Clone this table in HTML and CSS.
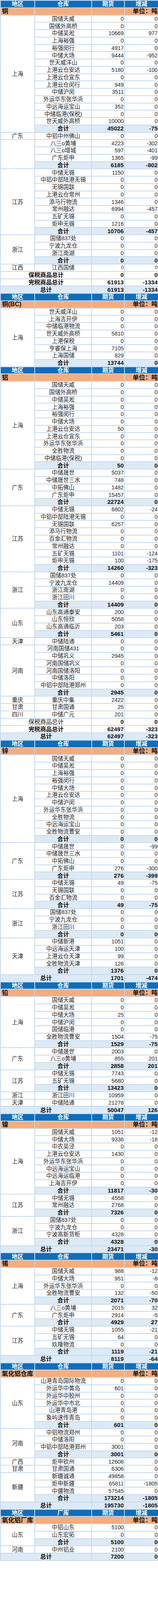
FILE: index.html
```html
<!DOCTYPE html>
<html lang="zh-CN">
<head>
<meta charset="utf-8">
<title>库存周报</title>
<link rel="stylesheet" href="styles.css">
</head>
<body>
<table class="stock">
<colgroup><col class="c1"><col class="c2"><col class="c3"><col class="c4"></colgroup>

<tbody>
<tr class="hd"><td>地区</td><td>仓库</td><td>期货</td><td>增减</td></tr>
<tr class="unit"><td class="metal">铜</td><td></td><td></td><td class="u">单位：吨</td></tr>
<tr><td class="reg" rowspan="16">上海</td><td class="wh">国储天威</td><td class="num">0</td><td class="num">0</td></tr>
<tr><td class="wh">国储外高桥</td><td class="num">0</td><td class="num">0</td></tr>
<tr><td class="wh">中储吴淞</td><td class="num">10669</td><td class="num">977</td></tr>
<tr><td class="wh">上海裕强</td><td class="num">0</td><td class="num">0</td></tr>
<tr><td class="wh">裕强闵行</td><td class="num">4917</td><td class="num">0</td></tr>
<tr><td class="wh">中储大场</td><td class="num">9444</td><td class="num">-952</td></tr>
<tr><td class="wh">世天威洋山</td><td class="num">0</td><td class="num">0</td></tr>
<tr><td class="wh">上港云仓安达</td><td class="num">5180</td><td class="num">-100</td></tr>
<tr><td class="wh">上港云仓宜东</td><td class="num">0</td><td class="num">0</td></tr>
<tr><td class="wh">上港云仓闵行</td><td class="num">949</td><td class="num">0</td></tr>
<tr><td class="wh">中储沪闵</td><td class="num">3511</td><td class="num">0</td></tr>
<tr><td class="wh">外运华东张华浜</td><td class="num">0</td><td class="num">0</td></tr>
<tr><td class="wh">中远海运宝山</td><td class="num">352</td><td class="num">0</td></tr>
<tr><td class="wh">中储临港(保税)</td><td class="num">0</td><td class="num">0</td></tr>
<tr><td class="wh">世天威外高桥</td><td class="num">10000</td><td class="num">0</td></tr>
<tr class="sub"><td class="wh">合计</td><td class="num">45022</td><td class="num">-75</td></tr>
<tr><td class="reg">广东</td><td class="wh">中铝中州佛山</td><td class="num">0</td><td class="num">0</td></tr>
<tr><td class="reg" rowspan="4"></td><td class="wh">八三o黄埔</td><td class="num">4223</td><td class="num">-302</td></tr>
<tr><td class="wh">八三o增城</td><td class="num">597</td><td class="num">-401</td></tr>
<tr><td class="wh">广东炬申</td><td class="num">1365</td><td class="num">-99</td></tr>
<tr class="sub"><td class="wh">合计</td><td class="num">6185</td><td class="num">-802</td></tr>
<tr><td class="reg" rowspan="9">江苏</td><td class="wh">中储无锡</td><td class="num">1150</td><td class="num">0</td></tr>
<tr><td class="wh">中铝中部陆港无锡</td><td class="num">0</td><td class="num">0</td></tr>
<tr><td class="wh">无锡国联</td><td class="num">0</td><td class="num">0</td></tr>
<tr><td class="wh">上港云仓常州</td><td class="num">0</td><td class="num">0</td></tr>
<tr><td class="wh">添马行物流</td><td class="num">1346</td><td class="num">0</td></tr>
<tr><td class="wh">常州融达</td><td class="num">6994</td><td class="num">-457</td></tr>
<tr><td class="wh">五矿无锡</td><td class="num">0</td><td class="num">0</td></tr>
<tr><td class="wh">炬申无锡</td><td class="num">1216</td><td class="num">0</td></tr>
<tr class="sub"><td class="wh">合计</td><td class="num">10706</td><td class="num">-457</td></tr>
<tr><td class="reg" rowspan="4">浙江</td><td class="wh">国储837处</td><td class="num">0</td><td class="num">0</td></tr>
<tr><td class="wh">宁波九龙仓</td><td class="num">0</td><td class="num">0</td></tr>
<tr><td class="wh">浙江南湖</td><td class="num">0</td><td class="num">0</td></tr>
<tr class="sub"><td class="wh">合计</td><td class="num">0</td><td class="num">0</td></tr>
<tr><td class="reg">江西</td><td class="wh">江西国储</td><td class="num small">0</td><td class="num small">0</td></tr>
<tr class="grand"><td class="lbl" colspan="2">保税商品总计</td><td class="num">0</td><td class="num">0</td></tr>
<tr class="grand"><td class="lbl" colspan="2">完税商品总计</td><td class="num">61913</td><td class="num">-1334</td></tr>
<tr class="tot"><td class="lbl" colspan="2">总计</td><td class="num">61913</td><td class="num">-1334</td></tr>
</tbody>

<tbody>
<tr class="hd"><td>地区</td><td>仓库</td><td>期货</td><td>增减</td></tr>
<tr class="unit"><td class="metal">铜(BC)</td><td></td><td></td><td class="u">单位：吨</td></tr>
<tr><td class="reg" rowspan="8">上海</td><td class="wh">世天威洋山</td><td class="num">0</td><td class="num">0</td></tr>
<tr><td class="wh">上海吉开伊</td><td class="num">0</td><td class="num">0</td></tr>
<tr><td class="wh">中储临港物流</td><td class="num">0</td><td class="num">0</td></tr>
<tr><td class="wh">世天威外高桥</td><td class="num">5810</td><td class="num">0</td></tr>
<tr><td class="wh">上港保税</td><td class="num">0</td><td class="num">0</td></tr>
<tr><td class="wh">亨睿保上海</td><td class="num">7105</td><td class="num">0</td></tr>
<tr><td class="wh">上海国储</td><td class="num">829</td><td class="num">0</td></tr>
<tr class="sub"><td class="wh">合计</td><td class="num">13744</td><td class="num">0</td></tr>
</tbody>

<tbody>
<tr class="hd"><td>地区</td><td>仓库</td><td>期货</td><td>增减</td></tr>
<tr class="unit"><td class="metal">铝</td><td></td><td></td><td class="u">单位：吨</td></tr>
<tr><td class="reg" rowspan="12">上海</td><td class="wh">国储天威</td><td class="num">0</td><td class="num">0</td></tr>
<tr><td class="wh">国储外高桥</td><td class="num">0</td><td class="num">0</td></tr>
<tr><td class="wh">中储吴淞</td><td class="num">0</td><td class="num">0</td></tr>
<tr><td class="wh">上海裕强</td><td class="num">0</td><td class="num">0</td></tr>
<tr><td class="wh">裕强闵行</td><td class="num">0</td><td class="num">0</td></tr>
<tr><td class="wh">中储大场</td><td class="num">0</td><td class="num">0</td></tr>
<tr><td class="wh">上港云仓安达</td><td class="num">50</td><td class="num">0</td></tr>
<tr><td class="wh">上港云仓宜东</td><td class="num">0</td><td class="num">0</td></tr>
<tr><td class="wh">外运华东张华浜</td><td class="num">0</td><td class="num">0</td></tr>
<tr><td class="wh">全胜物流</td><td class="num">0</td><td class="num">0</td></tr>
<tr><td class="wh">中储临港(保税)</td><td class="num">0</td><td class="num">0</td></tr>
<tr class="sub"><td class="wh">合计</td><td class="num">50</td><td class="num">0</td></tr>
<tr><td class="reg" rowspan="5">广东</td><td class="wh">中储晟世</td><td class="num">5037</td><td class="num">0</td></tr>
<tr><td class="wh">中储晟世三水</td><td class="num">748</td><td class="num">0</td></tr>
<tr><td class="wh">中拓佛山</td><td class="num">1482</td><td class="num">0</td></tr>
<tr><td class="wh">广东炬申</td><td class="num">15457</td><td class="num">0</td></tr>
<tr class="sub"><td class="wh">合计</td><td class="num">22724</td><td class="num">0</td></tr>
<tr><td class="reg" rowspan="9">江苏</td><td class="wh">中储无锡</td><td class="num">6802</td><td class="num">-24</td></tr>
<tr><td class="wh">中铝中部陆港无锡</td><td class="num">0</td><td class="num">0</td></tr>
<tr><td class="wh">无锡国联</td><td class="num">6257</td><td class="num">0</td></tr>
<tr><td class="wh">添马行物流</td><td class="num">0</td><td class="num">0</td></tr>
<tr><td class="wh">百金汇物流</td><td class="num">0</td><td class="num">0</td></tr>
<tr><td class="wh">常州融达</td><td class="num">0</td><td class="num">0</td></tr>
<tr><td class="wh">五矿无锡</td><td class="num">1101</td><td class="num">-124</td></tr>
<tr><td class="wh">炬申无锡</td><td class="num">100</td><td class="num">-175</td></tr>
<tr class="sub"><td class="wh">合计</td><td class="num">14260</td><td class="num">-323</td></tr>
<tr><td class="reg" rowspan="5">浙江</td><td class="wh">国储837处</td><td class="num">0</td><td class="num">0</td></tr>
<tr><td class="wh">宁波九龙仓</td><td class="num">14409</td><td class="num">0</td></tr>
<tr><td class="wh">浙江南湖</td><td class="num">0</td><td class="num">0</td></tr>
<tr><td class="wh">浙江田川</td><td class="num">0</td><td class="num">0</td></tr>
<tr class="sub"><td class="wh">合计</td><td class="num">14409</td><td class="num">0</td></tr>
<tr><td class="reg" rowspan="4">山东</td><td class="wh">山东高通泰安</td><td class="num">200</td><td class="num">0</td></tr>
<tr><td class="wh">山东恒欣</td><td class="num">5058</td><td class="num">0</td></tr>
<tr><td class="wh">山东高通临沂</td><td class="num">203</td><td class="num">0</td></tr>
<tr class="sub"><td class="wh">合计</td><td class="num">5461</td><td class="num">0</td></tr>
<tr><td class="reg">天津</td><td class="wh">中储陆通</td><td class="num">0</td><td class="num">0</td></tr>
<tr><td class="reg" rowspan="7">河南</td><td class="wh">河南国储431</td><td class="num">0</td><td class="num">0</td></tr>
<tr><td class="wh">中储巩义</td><td class="num">2945</td><td class="num">0</td></tr>
<tr><td class="wh">河南国储巩义</td><td class="num">0</td><td class="num">0</td></tr>
<tr><td class="wh">河南国储洛阳</td><td class="num">0</td><td class="num">0</td></tr>
<tr><td class="wh">中储洛阳</td><td class="num">0</td><td class="num">0</td></tr>
<tr><td class="wh">中铝中部陆港郑州</td><td class="num">0</td><td class="num">0</td></tr>
<tr class="sub"><td class="wh">合计</td><td class="num">2945</td><td class="num">0</td></tr>
<tr><td class="reg">重庆</td><td class="wh">重庆中集</td><td class="num">2422</td><td class="num">0</td></tr>
<tr><td class="reg">甘肃</td><td class="wh">甘肃国通</td><td class="num">25</td><td class="num">0</td></tr>
<tr><td class="reg">四川</td><td class="wh">中储广元</td><td class="num">201</td><td class="num">0</td></tr>
<tr class="grand"><td class="lbl plain" colspan="2">保税商品总计</td><td class="num">0</td><td class="num">0</td></tr>
<tr class="grand"><td class="lbl" colspan="2">完税商品总计</td><td class="num">62497</td><td class="num">-323</td></tr>
<tr class="tot"><td class="lbl" colspan="2">总计</td><td class="num">62497</td><td class="num">-323</td></tr>
</tbody>

<tbody>
<tr class="hd"><td>地区</td><td>仓库</td><td>期货</td><td>增减</td></tr>
<tr class="unit"><td class="metal">锌</td><td></td><td></td><td class="u">单位：吨</td></tr>
<tr><td class="reg" rowspan="12">上海</td><td class="wh">国储天威</td><td class="num">0</td><td class="num">0</td></tr>
<tr><td class="wh">中储吴淞</td><td class="num">0</td><td class="num">0</td></tr>
<tr><td class="wh">上海裕强</td><td class="num">0</td><td class="num">0</td></tr>
<tr><td class="wh">裕强闵行</td><td class="num">0</td><td class="num">0</td></tr>
<tr><td class="wh">中储大场</td><td class="num">0</td><td class="num">0</td></tr>
<tr><td class="wh">上港云仓安达</td><td class="num">0</td><td class="num">0</td></tr>
<tr><td class="wh">中储沪闵</td><td class="num">0</td><td class="num">0</td></tr>
<tr><td class="wh">外运华东张华浜</td><td class="num">0</td><td class="num">0</td></tr>
<tr><td class="wh">全胜物流</td><td class="num">0</td><td class="num">0</td></tr>
<tr><td class="wh">中远海运宝山</td><td class="num">0</td><td class="num">0</td></tr>
<tr><td class="wh">全胜物流曹安</td><td class="num">0</td><td class="num">0</td></tr>
<tr class="sub"><td class="wh">合计</td><td class="num">0</td><td class="num">0</td></tr>
<tr><td class="reg" rowspan="5">广东</td><td class="wh">中储晟世</td><td class="num">0</td><td class="num">-99</td></tr>
<tr><td class="wh">中储晟世三水</td><td class="num">0</td><td class="num">0</td></tr>
<tr><td class="wh">中拓佛山</td><td class="num">0</td><td class="num">0</td></tr>
<tr><td class="wh">广东炬申</td><td class="num">276</td><td class="num">-300</td></tr>
<tr class="sub"><td class="wh">合计</td><td class="num">276</td><td class="num">-399</td></tr>
<tr><td class="reg" rowspan="4">江苏</td><td class="wh">中储无锡</td><td class="num">49</td><td class="num">-75</td></tr>
<tr><td class="wh">无锡国联</td><td class="num">0</td><td class="num">0</td></tr>
<tr><td class="wh">百金汇物流</td><td class="num">0</td><td class="num">0</td></tr>
<tr class="sub"><td class="wh">合计</td><td class="num">49</td><td class="num">-75</td></tr>
<tr><td class="reg" rowspan="4">浙江</td><td class="wh">国储837处</td><td class="num">0</td><td class="num">0</td></tr>
<tr><td class="wh">宁波九龙仓</td><td class="num">0</td><td class="num">0</td></tr>
<tr><td class="wh">浙江田川</td><td class="num">0</td><td class="num">0</td></tr>
<tr class="sub"><td class="wh">合计</td><td class="num">0</td><td class="num">0</td></tr>
<tr><td class="reg" rowspan="5">天津</td><td class="wh">中储新港</td><td class="num">1051</td><td class="num">0</td></tr>
<tr><td class="wh">中远海运天津</td><td class="num">100</td><td class="num">0</td></tr>
<tr><td class="wh">上港云仓天津</td><td class="num">99</td><td class="num">0</td></tr>
<tr><td class="wh">全胜物流天津</td><td class="num">126</td><td class="num">0</td></tr>
<tr class="sub"><td class="wh">合计</td><td class="num">1376</td><td class="num">0</td></tr>
<tr class="tot"><td class="lbl" colspan="2">总计</td><td class="num">1701</td><td class="num">-474</td></tr>
</tbody>

<tbody>
<tr class="hd"><td>地区</td><td>仓库</td><td>期货</td><td>增减</td></tr>
<tr class="unit"><td class="metal">铅</td><td></td><td></td><td class="u">单位：吨</td></tr>
<tr><td class="reg" rowspan="7">上海</td><td class="wh">国储天威</td><td class="num">0</td><td class="num">0</td></tr>
<tr><td class="wh">中储吴淞</td><td class="num">0</td><td class="num">0</td></tr>
<tr><td class="wh">中储大场</td><td class="num">25</td><td class="num">0</td></tr>
<tr><td class="wh">中储沪闵</td><td class="num">0</td><td class="num">0</td></tr>
<tr><td class="wh">国储临港</td><td class="num">0</td><td class="num">0</td></tr>
<tr><td class="wh">全胜物流曹安</td><td class="num">1504</td><td class="num">-75</td></tr>
<tr class="sub"><td class="wh">合计</td><td class="num">1529</td><td class="num">-75</td></tr>
<tr><td class="reg" rowspan="3">广东</td><td class="wh">中储晟世</td><td class="num">2003</td><td class="num">0</td></tr>
<tr><td class="wh">八三o黄埔</td><td class="num">855</td><td class="num">201</td></tr>
<tr class="sub"><td class="wh">合计</td><td class="num">2858</td><td class="num">201</td></tr>
<tr><td class="reg" rowspan="3">江苏</td><td class="wh">中储无锡</td><td class="num">7743</td><td class="num">0</td></tr>
<tr><td class="wh">五矿无锡</td><td class="num">5680</td><td class="num">0</td></tr>
<tr class="sub"><td class="wh">合计</td><td class="num">13423</td><td class="num">0</td></tr>
<tr><td class="reg">浙江</td><td class="wh">浙江田川</td><td class="num">10959</td><td class="num">0</td></tr>
<tr><td class="reg">天津</td><td class="wh">中储陆通</td><td class="num">21278</td><td class="num">0</td></tr>
<tr class="tot"><td class="lbl" colspan="2">总计</td><td class="num">50047</td><td class="num">126</td></tr>
</tbody>

<tbody>
<tr class="hd"><td>地区</td><td>仓库</td><td>期货</td><td>增减</td></tr>
<tr class="unit"><td class="metal">镍</td><td></td><td></td><td class="u">单位：吨</td></tr>
<tr><td class="reg" rowspan="9">上海</td><td class="wh">国储天威</td><td class="num">1051</td><td class="num">-12</td></tr>
<tr><td class="wh">中储大场</td><td class="num">9336</td><td class="num">-18</td></tr>
<tr><td class="wh">中农吴泾</td><td class="num">0</td><td class="num">0</td></tr>
<tr><td class="wh">上港云仓安达</td><td class="num">1430</td><td class="num">0</td></tr>
<tr><td class="wh">外运华东张华浜</td><td class="num">0</td><td class="num">0</td></tr>
<tr><td class="wh">中远海运宝山</td><td class="num">0</td><td class="num">0</td></tr>
<tr><td class="wh">中远海运临港</td><td class="num">0</td><td class="num">0</td></tr>
<tr><td class="wh">上海吉开伊</td><td class="num">0</td><td class="num">0</td></tr>
<tr class="sub"><td class="wh">合计</td><td class="num">11817</td><td class="num">-30</td></tr>
<tr><td class="reg" rowspan="3">江苏</td><td class="wh">中储无锡</td><td class="num">4558</td><td class="num">0</td></tr>
<tr><td class="wh">常州融达</td><td class="num">2768</td><td class="num">0</td></tr>
<tr class="sub"><td class="wh">合计</td><td class="num">7326</td><td class="num">0</td></tr>
<tr><td class="reg" rowspan="4">浙江</td><td class="wh">国储837处</td><td class="num">0</td><td class="num">0</td></tr>
<tr><td class="wh">宁波九龙仓</td><td class="num">0</td><td class="num">0</td></tr>
<tr><td class="wh">宁波高新货柜</td><td class="num">4328</td><td class="num">0</td></tr>
<tr class="sub"><td class="wh">合计</td><td class="num">4328</td><td class="num">0</td></tr>
<tr class="tot"><td class="lbl" colspan="2">总计</td><td class="num">23471</td><td class="num">-30</td></tr>
</tbody>

<tbody>
<tr class="hd"><td>地区</td><td>仓库</td><td>期货</td><td>增减</td></tr>
<tr class="unit"><td class="metal">锡</td><td></td><td></td><td class="u">单位：吨</td></tr>
<tr><td class="reg" rowspan="5">上海</td><td class="wh">国储天威</td><td class="num">988</td><td class="num">-12</td></tr>
<tr><td class="wh">中储大场</td><td class="num">951</td><td class="num">-8</td></tr>
<tr><td class="wh">外运华东张华浜</td><td class="num">0</td><td class="num">0</td></tr>
<tr><td class="wh">全胜物流曹安</td><td class="num">132</td><td class="num">-50</td></tr>
<tr class="sub"><td class="wh">合计</td><td class="num">2071</td><td class="num">-70</td></tr>
<tr><td class="reg" rowspan="3">广东</td><td class="wh">八三o黄埔</td><td class="num">2015</td><td class="num">32</td></tr>
<tr><td class="wh">广东炬申</td><td class="num">2914</td><td class="num">-5</td></tr>
<tr class="sub"><td class="wh">合计</td><td class="num">4929</td><td class="num">27</td></tr>
<tr><td class="reg" rowspan="4">江苏</td><td class="wh">中储无锡</td><td class="num">1055</td><td class="num">-21</td></tr>
<tr><td class="wh">五矿无锡</td><td class="num">64</td><td class="num">0</td></tr>
<tr><td class="wh">玖隆物流</td><td class="num">0</td><td class="num">0</td></tr>
<tr class="sub"><td class="wh">合计</td><td class="num">1119</td><td class="num">-21</td></tr>
<tr class="tot"><td class="lbl" colspan="2">总计</td><td class="num">8119</td><td class="num">-64</td></tr>
</tbody>

<tbody>
<tr class="hd"><td>地区</td><td>仓库</td><td>期货</td><td>增减</td></tr>
<tr class="unit"><td class="metal">氧化铝仓库</td><td></td><td></td><td class="u">单位：吨</td></tr>
<tr><td class="reg" rowspan="7">山东</td><td class="wh">山港青岛国际物流</td><td class="num">0</td><td class="num">0</td></tr>
<tr><td class="wh">外运华中黄岛</td><td class="num">601</td><td class="num">0</td></tr>
<tr><td class="wh">外运华中胶州</td><td class="num">0</td><td class="num">0</td></tr>
<tr><td class="wh">外运华中市北</td><td class="num">0</td><td class="num">0</td></tr>
<tr><td class="wh">山港青岛港</td><td class="num">0</td><td class="num">0</td></tr>
<tr><td class="wh">象屿速传青岛</td><td class="num">0</td><td class="num">0</td></tr>
<tr class="sub"><td class="wh">合计</td><td class="num">601</td><td class="num">0</td></tr>
<tr><td class="reg" rowspan="4">河南</td><td class="wh">中铝物流郑州</td><td class="num">0</td><td class="num">0</td></tr>
<tr><td class="wh">中储洛阳</td><td class="num">0</td><td class="num">0</td></tr>
<tr><td class="wh">中铝中部陆港郑州</td><td class="num">3001</td><td class="num">0</td></tr>
<tr class="sub"><td class="wh">合计</td><td class="num">3001</td><td class="num">0</td></tr>
<tr><td class="reg">广西</td><td class="wh">炬申钦州</td><td class="num">12608</td><td class="num">0</td></tr>
<tr><td class="reg">甘肃</td><td class="wh">甘肃国通</td><td class="num">6306</td><td class="num">0</td></tr>
<tr><td class="reg" rowspan="4">新疆</td><td class="wh">新疆诚通</td><td class="num">49858</td><td class="num">0</td></tr>
<tr><td class="wh">炬申新疆</td><td class="num">65811</td><td class="num">-1805</td></tr>
<tr><td class="wh">中疆物流</td><td class="num">57545</td><td class="num">0</td></tr>
<tr class="sub"><td class="wh">合计</td><td class="num">173214</td><td class="num">-1805</td></tr>
<tr class="tot"><td class="lbl" colspan="2">总计</td><td class="num">195730</td><td class="num">-1805</td></tr>
</tbody>

<tbody>
<tr class="hd"><td>地区</td><td>厂库</td><td>期货</td><td>增减</td></tr>
<tr class="unit"><td class="metal">氧化铝厂库</td><td></td><td></td><td class="u">单位：吨</td></tr>
<tr><td class="reg" rowspan="3">山东</td><td class="wh">中铝山东</td><td class="num">5100</td><td class="num">0</td></tr>
<tr><td class="wh">山东宏拓</td><td class="num">0</td><td class="num">0</td></tr>
<tr class="sub"><td class="wh">合计</td><td class="num">5100</td><td class="num">0</td></tr>
<tr><td class="reg">河南</td><td class="wh">中州铝业</td><td class="num">2100</td><td class="num">0</td></tr>
<tr class="tot"><td class="lbl" colspan="2">总计</td><td class="num">7200</td><td class="num">0</td></tr>
</tbody>
</table>
</body>
</html>
```

FILE: styles.css
```css
* { box-sizing: border-box; }
html, body { margin: 0; padding: 0; background: #ffffff; }
body {
  width: 405px;
  font-family: "Liberation Sans", "Noto Sans CJK SC", sans-serif;
  color: #1e1e1e;
}
.stock {
  width: 405px;
  border-collapse: collapse;
  table-layout: fixed;
  font-size: 14px;
}
.c1 { width: 88px; }
.c2 { width: 146px; }
.c3 { width: 84px; }
.c4 { width: 87px; }

.stock tr { height: 18.75px; }
.stock td {
  border: 2px solid #c6daee;
  padding: 0 1px;
  line-height: 16px;
  white-space: nowrap;
  vertical-align: middle;
  background: #ffffff;
}

.hd td {
  background: #0a6fbf;
  color: #ffffff;
  font-weight: 700;
  font-size: 15px;
  text-align: center;
}
.unit td {
  background: #fbab77;
  color: #111111;
  font-weight: 700;
  font-size: 16px;
}
.unit .metal { text-align: left; padding-left: 3px; }
.unit .u { text-align: right; padding-right: 1px; }

.reg { text-align: center; font-size: 14.5px; }
.wh { text-align: center; font-size: 14.5px; }
.num { text-align: right; }
.num.small { font-size: 12px; }

.sub td {
  background: #dceaf6;
  font-weight: 700;
  color: #111111;
}
.sub .wh { font-size: 15px; }
.sub .num { font-size: 15px; }

.grand td { font-weight: 700; color: #111111; font-size: 15px; }
.grand .lbl { text-align: center; }
.grand .lbl.plain { font-weight: 400; }

.tot td {
  background: #dceaf6;
  font-weight: 700;
  color: #111111;
  font-size: 15px;
}
.tot .lbl { text-align: center; }
```
